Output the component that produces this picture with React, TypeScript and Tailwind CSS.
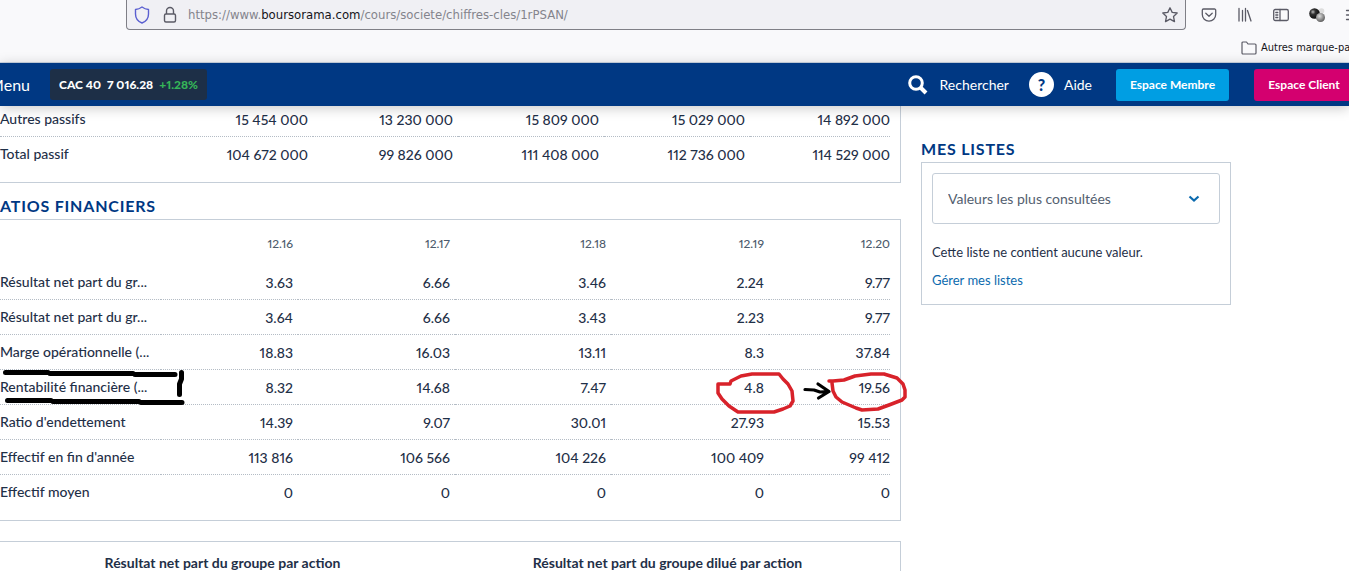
import type { ReactNode } from 'react'
import clsx from 'clsx'

type Row = { label: string; values: string[] }

const passifRows: Row[] = [
  { label: 'Autres passifs', values: ['15 454 000', '13 230 000', '15 809 000', '15 029 000', '14 892 000'] },
  { label: 'Total passif', values: ['104 672 000', '99 826 000', '111 408 000', '112 736 000', '114 529 000'] },
]

const ratioYears = ['12.16', '12.17', '12.18', '12.19', '12.20']

const ratioRows: Row[] = [
  { label: 'Résultat net part du gr...', values: ['3.63', '6.66', '3.46', '2.24', '9.77'] },
  { label: 'Résultat net part du gr...', values: ['3.64', '6.66', '3.43', '2.23', '9.77'] },
  { label: 'Marge opérationnelle (...', values: ['18.83', '16.03', '13.11', '8.3', '37.84'] },
  { label: 'Rentabilité financière (...', values: ['8.32', '14.68', '7.47', '4.8', '19.56'] },
  { label: "Ratio d'endettement", values: ['14.39', '9.07', '30.01', '27.93', '15.53'] },
  { label: "Effectif en fin d'année", values: ['113 816', '106 566', '104 226', '100 409', '99 412'] },
  { label: 'Effectif moyen', values: ['0', '0', '0', '0', '0'] },
]

const passifCols = ['w-[162px]', 'w-[151px]', 'w-[145px]', 'w-[146px]', 'w-[146px]', 'w-auto']
const ratioCols = ['w-[161px]', 'w-[137px]', 'w-[157px]', 'w-[156px]', 'w-[158px]', 'w-auto']

export default function App() {
  return (
    <div className="flex h-screen flex-col overflow-hidden bg-white font-['Lato','Open_Sans',sans-serif] text-[#1f3048] proportional-nums">
      <BrowserBar />
      <SiteHeader />
      <div className="flex items-start gap-5 pr-[118px]">
        <main className="min-w-0 flex-1">
          <section className="-mt-1 border-r border-b border-[#c5ced8] pr-2.5 pb-2.5">
            <FiguresTable cols={passifCols} rows={passifRows} />
          </section>

          <h2 className="mt-[13px] mb-[3px] text-base leading-5 font-bold tracking-wider text-[#003883]">ATIOS FINANCIERS</h2>
          <section className="relative border-y border-r border-[#c5ced8] pr-2.5 pb-2.5">
            <FiguresTable cols={ratioCols} rows={ratioRows} years={ratioYears} />
            <LabelMarks />
            <ValueMarks />
          </section>

          <section className="mt-5 grid grid-cols-2 border-t border-r border-[#c5ced8] pt-3 pr-2.5 text-center text-sm leading-[18px] font-bold">
            <h3>Résultat net part du groupe par action</h3>
            <h3>Résultat net part du groupe dilué par action</h3>
          </section>
        </main>
        <ListsPanel />
      </div>
    </div>
  )
}

function FiguresTable({ cols, rows, years }: { cols: string[]; rows: Row[]; years?: string[] }) {
  return (
    <table className="w-full table-fixed border-separate border-spacing-0 text-sm leading-5 font-medium">
      <colgroup>
        {cols.map((col, i) => <col key={i} className={col} />)}
      </colgroup>
      {years && (
        <thead>
          <tr className="h-[45px] text-xs text-[#4d5b6c]">
            <td />
            {years.map((year) => (
              <th key={year} scope="col" className="pt-0.5 pr-[5px] text-right font-medium last:pr-0">{year}</th>
            ))}
          </tr>
        </thead>
      )}
      <tbody>
        {rows.map((row, r) => {
          const line = clsx('border-b', r < rows.length - 1 ? 'border-dotted border-[#b4bcc5]' : 'border-transparent')
          return (
            <tr key={r} className="h-[35px]">
              <th scope="row" className={clsx('text-left font-medium whitespace-nowrap', line)}>{row.label}</th>
              {row.values.map((value, i) => (
                <td key={i} className={clsx('pt-0.5 pr-[5px] text-right whitespace-nowrap last:pr-0', line)}>{value}</td>
              ))}
            </tr>
          )
        })}
      </tbody>
    </table>
  )
}

// black strokes around the "Rentabilité financière" label
function LabelMarks() {
  return (
    <svg className="pointer-events-none absolute top-[146px] left-0" width="190" height="44" viewBox="0 366 190 44" fill="none" stroke="#000" strokeWidth="5" strokeLinecap="round" strokeLinejoin="round">
      <path d="M5.500 372.500H48M50 373.500H133M135 374.500H175" />
      <path d="M181.500 372.500V379L179.500 384V394.500" />
      <path d="M7.500 400.500H51M53 401.500H139M141 402.500H182" />
    </svg>
  )
}

// red circles around 4.8 and 19.56, with the arrow between them
function ValueMarks() {
  return (
    <svg className="pointer-events-none absolute top-[146px] -right-2" width="200" height="52" viewBox="708 366 200 52" fill="none" strokeLinecap="round" strokeLinejoin="round">
      <g stroke="#d8222a" strokeWidth="3.500">
        <path d="M718 384H730L731 381L741 376L752 374H779L783 379L788 384L792 391L793 401L790 406L783 409L774 412H738L729 406L722 399L718 393Z" />
        <path d="M829 381H833L844 380L855 376L871 374H884L897 378L903 384L905 390V397L902 400L889 405L878 409L862 410L856 408L842 402L836 397L833 391L832 383" />
      </g>
      <path d="M805 389.500L814 390L820 392L829 391.500M818 384L829 391.500L818.500 398" stroke="#000" strokeWidth="3.200" />
    </svg>
  )
}

function ListsPanel() {
  return (
    <aside className="w-[310px] shrink-0 pt-[33px]">
      <h2 className="mb-[3px] text-base leading-5 font-bold tracking-wider text-[#003883]">MES LISTES</h2>
      <div className="border border-[#c5ced8] px-2.5 pt-2.5 pb-[14px] text-[13px] leading-5">
        <div className="relative">
          <select aria-label="Mes listes" className="h-[51px] w-full appearance-none rounded-[3px] border border-[#c5ced8] bg-white px-[15px] text-sm text-[#53606f]">
            <option>Valeurs les plus consultées</option>
          </select>
          <svg className="pointer-events-none absolute top-[22px] right-5" width="12" height="8" viewBox="0 0 12 8" fill="none" stroke="#0b6aae" strokeWidth="2.200">
            <path d="M1.500 1.500L6 5.500L10.500 1.500" />
          </svg>
        </div>
        <p className="mt-[18px]">Cette liste ne contient aucune valeur.</p>
        <a href="#" className="mt-2 block text-[#0b6aae]">Gérer mes listes</a>
      </div>
    </aside>
  )
}

function SiteHeader() {
  return (
    <header className="relative z-10 flex h-[43px] shrink-0 items-center overflow-hidden bg-[#003883] text-sm whitespace-nowrap text-white shadow-[0_2px_12px_rgba(0,0,0,0.22)]">
      <button className="flex w-[30px] justify-end overflow-hidden text-base">Menu</button>
      <div className="ml-5 flex h-[31px] items-center gap-1.5 rounded-[3px] bg-[#1d2f47] px-[9px] text-[12px] font-black">
        <span>CAC 40</span>
        <span>7 016.28</span>
        <span className="text-[#35b558]">+1.28%</span>
      </div>
      <button className="ml-auto flex items-center gap-3">
        <svg width="20" height="20" viewBox="0 0 20 20" fill="none" stroke="#fff">
          <circle cx="8" cy="8" r="6.300" strokeWidth="3" />
          <path d="M12.500 12.500L18 18" strokeWidth="4" />
        </svg>
        Rechercher
      </button>
      <a href="#" className="ml-5 flex items-center gap-2.5">
        <span className="flex size-[25px] items-center justify-center rounded-full bg-white text-base font-black text-[#003883]">?</span>
        Aide
      </a>
      <button className="ml-6 h-8 w-[113px] rounded-[3px] bg-[#009ee3] text-xs font-bold">Espace Membre</button>
      <button className="ml-[25px] -mr-[5px] h-8 w-[100px] rounded-[3px] bg-[#d4006f] text-xs font-bold">Espace Client</button>
    </header>
  )
}

function BarIcon({ children, label }: { children: ReactNode; label: string }) {
  return (
    <button aria-label={label} className="shrink-0">
      <svg width="16" height="16" viewBox="0 0 16 16" fill="none" stroke="#5b5b66" strokeWidth="1.300" strokeLinecap="round" strokeLinejoin="round">
        {children}
      </svg>
    </button>
  )
}

function BrowserBar() {
  return (
    <div className="shrink-0 border-b border-[#ccd6e4] bg-[#f9f9fb] font-['DejaVu_Sans_Condensed','Noto_Sans',sans-serif]">
      <div className="flex h-[30px] overflow-hidden">
        <div className="ml-[126px] flex flex-1 items-center rounded-b-[4px] border border-t-0 border-[#7f7f86] bg-[#f0f0f4] px-[7px]">
          <svg width="16" height="18" viewBox="0 0 16 18" fill="none" stroke="#5a5fd0" strokeWidth="1.400" strokeLinejoin="round">
            <path d="M8 1C10 2.500 12 3.300 14.500 3.500V8C14.500 12 12 15.500 8 17C4 15.500 1.500 12 1.500 8V3.500C4 3.300 6 2.500 8 1Z" />
          </svg>
          <svg className="ml-3" width="16" height="18" viewBox="0 0 16 18" fill="none" stroke="#5b5b66" strokeWidth="1.400">
            <rect x="2.500" y="8" width="11" height="8" rx="1.500" />
            <path d="M4.500 8V5a3.500 3.500 0 0 1 7 0V8" />
          </svg>
          <p className="ml-2.5 flex-1 text-[13px] leading-4 text-[#84848c]">
            https://www.<span className="text-[#15141a]">boursorama.com</span>/cours/societe/chiffres-cles/1rPSAN/
          </p>
          <BarIcon label="Ajouter aux marque-pages">
            <path d="M8 .8L10.200 5.400L15.200 6L11.500 9.500L12.500 14.600L8 12.100L3.500 14.600L4.500 9.500L.8 6L5.800 5.400Z" />
          </BarIcon>
        </div>
        <div className="ml-[15px] flex w-[148px] items-center gap-5 overflow-hidden">
          <BarIcon label="Pocket">
            <path d="M2.500 2H13.500A1.200 1.200 0 0 1 14.700 3.200V7.500A6.700 6.700 0 0 1 1.300 7.500V3.200A1.200 1.200 0 0 1 2.500 2Z" />
            <path d="M4.800 6.200L8 9.200L11.200 6.200" />
          </BarIcon>
          <BarIcon label="Bibliothèque">
            <path d="M2 1.500V14M5.500 3.500V14M8.500 1.500V14M10.500 3.500L14 14" />
          </BarIcon>
          <BarIcon label="Panneau latéral">
            <rect x=".7" y="2.500" width="14.600" height="11" rx="1.500" />
            <path d="M7 2.500V13.500M2.800 5.500H4.800M2.800 8H4.800M2.800 10.500H4.800" />
          </BarIcon>
          <BarIcon label="Extension">
            <defs>
              <radialGradient id="dark" cx=".35" cy=".35" r=".6"><stop stopColor="#bbb" /><stop offset=".4" stopColor="#333" /><stop offset="1" stopColor="#111" /></radialGradient>
              <radialGradient id="grey" cx=".4" cy=".35" r=".7"><stop stopColor="#ddd" /><stop offset="1" stopColor="#555" /></radialGradient>
            </defs>
            <circle cx="12.500" cy="4" r="2.800" fill="#ddd" stroke="none" />
            <circle cx="5.500" cy="6.500" r="5.300" fill="url(#dark)" stroke="none" />
            <circle cx="11.500" cy="10.500" r="4.500" fill="url(#grey)" stroke="none" />
          </BarIcon>
          <BarIcon label="Menu de l'application">
            <path d="M1.500 3.500H15M1.500 8H15M1.500 12.500H15" />
          </BarIcon>
        </div>
      </div>
      <div className="flex h-8 items-center justify-end overflow-hidden pt-1">
        <button className="flex w-[108px] items-center gap-1 overflow-hidden text-[11px] whitespace-nowrap text-[#15141a]">
          <svg className="shrink-0" width="16" height="14" viewBox="0 0 16 14" fill="none" stroke="#5b5b66" strokeWidth="1.200" strokeLinejoin="round">
            <path d="M2 1H5.500L7 3H14A1 1 0 0 1 15 4V12A1 1 0 0 1 14 13H2A1 1 0 0 1 1 12V2A1 1 0 0 1 2 1Z" />
          </svg>
          Autres marque-pages
        </button>
      </div>
    </div>
  )
}
